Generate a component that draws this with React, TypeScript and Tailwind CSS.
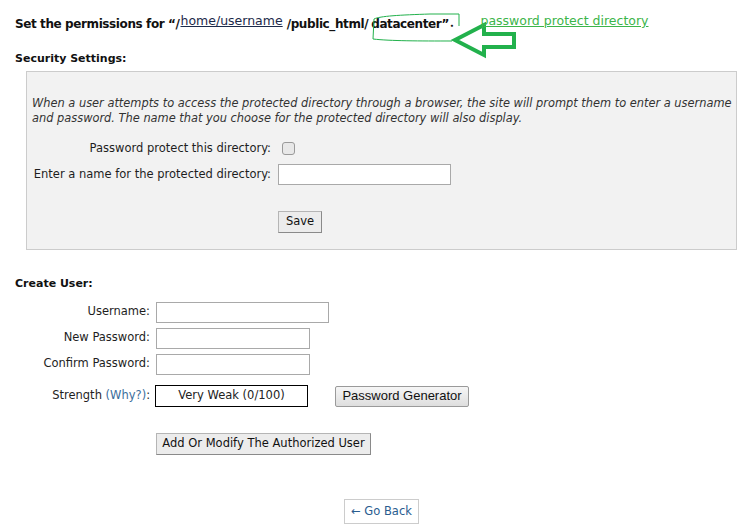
import React from "react";

const font = { fontFamily: '"DejaVu Sans", Verdana, sans-serif' };

function Row({ label, children }: { label: React.ReactNode; children: React.ReactNode }) {
  return (
    <div className="flex items-center h-[26px]">
      <div className="w-[141px] text-right pr-[6px] text-[11.5px] text-[#1e1e1e]">{label}</div>
      {children}
    </div>
  );
}

export default function App() {
  return (
    <div className="relative w-[745px] h-[524px] overflow-hidden bg-white text-[#222]" style={font}>
      {/* annotations */}
      <svg className="absolute left-0 top-0 pointer-events-none" width="745" height="80">
        <path
          d="M374 19 C 380 16, 400 15, 430 14 L 459 14 L 459 26 M374 19 L 373 39 C 390 41, 420 41, 452 41"
          fill="none"
          stroke="#22b14c"
          strokeWidth="1"
        />
        <polygon
          points="455,40 484,25 484,34 514,34 514,47 484,47 484,55"
          fill="none"
          stroke="#22b14c"
          strokeWidth="4"
          strokeLinejoin="miter"
        />
      </svg>

      <div className="pl-[15px] pt-[15px]">
        <div className="flex items-baseline h-[20px] text-[12px] font-bold text-[#111] tracking-[-0.4px]">
          <span>Set the permissions for “/</span>
          <span className="relative -top-[3px] font-normal underline text-[#1c2a4a] ml-[1px] text-[12.5px] tracking-normal">home/username</span>
          <span className="ml-[4px]">/public_html/</span>
          <span className="ml-[3px]">datacenter”</span>
          <span className="ml-[1px] text-[6px]">•</span>
          <a className="relative -top-[3px] ml-[27px] font-normal underline text-[#3cb54a] text-[12.5px] tracking-normal">password protect directory</a>
        </div>

        <div className="mt-[16px] text-[11px] font-bold text-[#111]">Security Settings:</div>

        <div className="ml-[11px] mt-[3px] w-[711px] h-[179px] bg-[#f2f2f2] border border-[#cccccc] pl-[5px] pt-[24px]">
          <p className="italic text-[11.4px] leading-[15px] text-[#333]">
            When a user attempts to access the protected directory through a browser, the site will prompt them to enter a username and password. The name that you choose for the protected directory will also display.
          </p>
          <div className="mt-[14px] flex items-center h-[18px]">
            <div className="w-[239px] text-right text-[11.5px] text-[#1e1e1e]">Password protect this directory:</div>
            <div className="ml-[11px] w-[13px] h-[13px] rounded-[3px] border border-[#9a9a9a] bg-[#e8e8e8]" />
          </div>
          <div className="mt-[6px] flex items-center h-[22px]">
            <div className="w-[239px] text-right text-[11.5px] text-[#1e1e1e]">Enter a name for the protected directory:</div>
            <div className="ml-[7px] w-[173px] h-[21px] bg-white border border-[#a9a9a9]" />
          </div>
          <div className="mt-[25px] ml-[246px] w-[44px] h-[22px] bg-[#ececec] border border-[#b5b5b5] border-b-[#8a8a8a] border-r-[#8a8a8a] flex items-center justify-center text-[11.5px] text-[#111]">
            Save
          </div>
        </div>

        <div className="mt-[26px] text-[11px] font-bold text-[#111]">Create User:</div>

        <div className="mt-[7px]">
          <Row label="Username:">
            <div className="w-[173px] h-[21px] bg-white border border-[#a9a9a9]" />
          </Row>
          <Row label="New Password:">
            <div className="w-[154px] h-[21px] bg-white border border-[#a9a9a9]" />
          </Row>
          <Row label="Confirm Password:">
            <div className="w-[154px] h-[21px] bg-white border border-[#a9a9a9]" />
          </Row>
          <div className="flex items-center h-[24px] mt-[7px]">
            <div className="w-[141px] text-right pr-[6px] text-[11.5px] text-[#1e1e1e]">
              Strength <span className="text-[#3b6e9c]">(Why?)</span>:
            </div>
            <div className="-ml-[1px] w-[153px] h-[22px] border border-black flex items-center justify-center text-[11.5px] text-[#222]">
              Very Weak (0/100)
            </div>
            <div
              className="ml-[27px] w-[134px] h-[21px] bg-gradient-to-b from-[#f6f6f6] to-[#dedede] border border-[#9a9a9a] rounded-[2px] flex items-center justify-center text-[13px] text-[#111]"
              style={{ fontFamily: '"Liberation Sans", Arial, sans-serif' }}
            >
              Password Generator
            </div>
          </div>
        </div>

        <div className="mt-[25px] ml-[141px] w-[215px] h-[22px] bg-[#ececec] border border-[#b5b5b5] border-b-[#8a8a8a] border-r-[#8a8a8a] flex items-center justify-center text-[11.5px] text-[#111]">
          Add Or Modify The Authorized User
        </div>

        <div className="mt-[44px] ml-[329px] w-[75px] h-[25px] bg-white border border-[#cccccc] flex items-center justify-center text-[11.5px] text-[#2a5d8f]">
          ← Go Back
        </div>
      </div>
    </div>
  );
}
